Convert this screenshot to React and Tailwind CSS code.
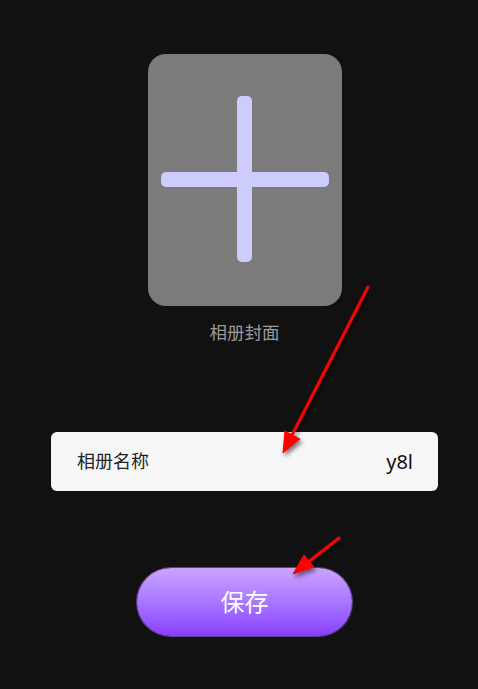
export default function App() {
  return (
    <div
      className="relative w-[478px] h-[689px] bg-[#111111] overflow-hidden"
      style={{ fontFamily: '"Noto Sans", "Noto Sans CJK SC", sans-serif' }}
    >
      <div className="flex flex-col items-center pt-[54px] pl-[11px]">
        <div className="w-[194px] h-[252px] rounded-[18px] bg-[#7b7b7b] flex items-center justify-center">
          <svg width="194" height="252" viewBox="0 0 194 252">
            <rect x="89" y="42" width="15" height="166" rx="5" fill="#ccccff" />
            <rect x="13" y="118" width="168" height="15" rx="5" fill="#ccccff" />
          </svg>
        </div>
        <div className="mt-[14px] text-[17.5px] leading-[24px] text-[#9a9a9a]">相册封面</div>
        <div className="mt-[88px] w-[387px] h-[59px] rounded-[6px] bg-[#f7f7f7] flex items-center justify-between pl-[26px] pr-[25px]">
          <span className="text-[18px] text-[#222222]">相册名称</span>
          <span className="text-[20px] text-[#111111]">y8l</span>
        </div>
        <button className="mt-[77px] w-[215px] h-[68px] rounded-full bg-gradient-to-b from-[#cba3ff] to-[#8a3bff] text-white text-[24px] flex items-center justify-center shadow-[0_0_0_1px_rgba(150,100,220,0.6)]">
          保存
        </button>
      </div>
      <svg
        className="absolute inset-0 pointer-events-none"
        width="478"
        height="689"
        viewBox="0 0 478 689"
      >
        <defs>
          <filter id="sh" x="-20%" y="-20%" width="140%" height="140%">
            <feDropShadow dx="2" dy="3" stdDeviation="2" floodColor="#000" floodOpacity="0.5" />
          </filter>
        </defs>
        <g filter="url(#sh)" fill="#ff0000" stroke="#ff0000">
          <line x1="368" y1="287" x2="291" y2="437" strokeWidth="3" strokeLinecap="round" />
          <polygon points="283,453 285,431 300,439" strokeWidth="1" />
          <line x1="339" y1="538" x2="307" y2="563" strokeWidth="3" strokeLinecap="round" />
          <polygon points="293,574 304,555 314,567" strokeWidth="1" />
        </g>
      </svg>
    </div>
  );
}
